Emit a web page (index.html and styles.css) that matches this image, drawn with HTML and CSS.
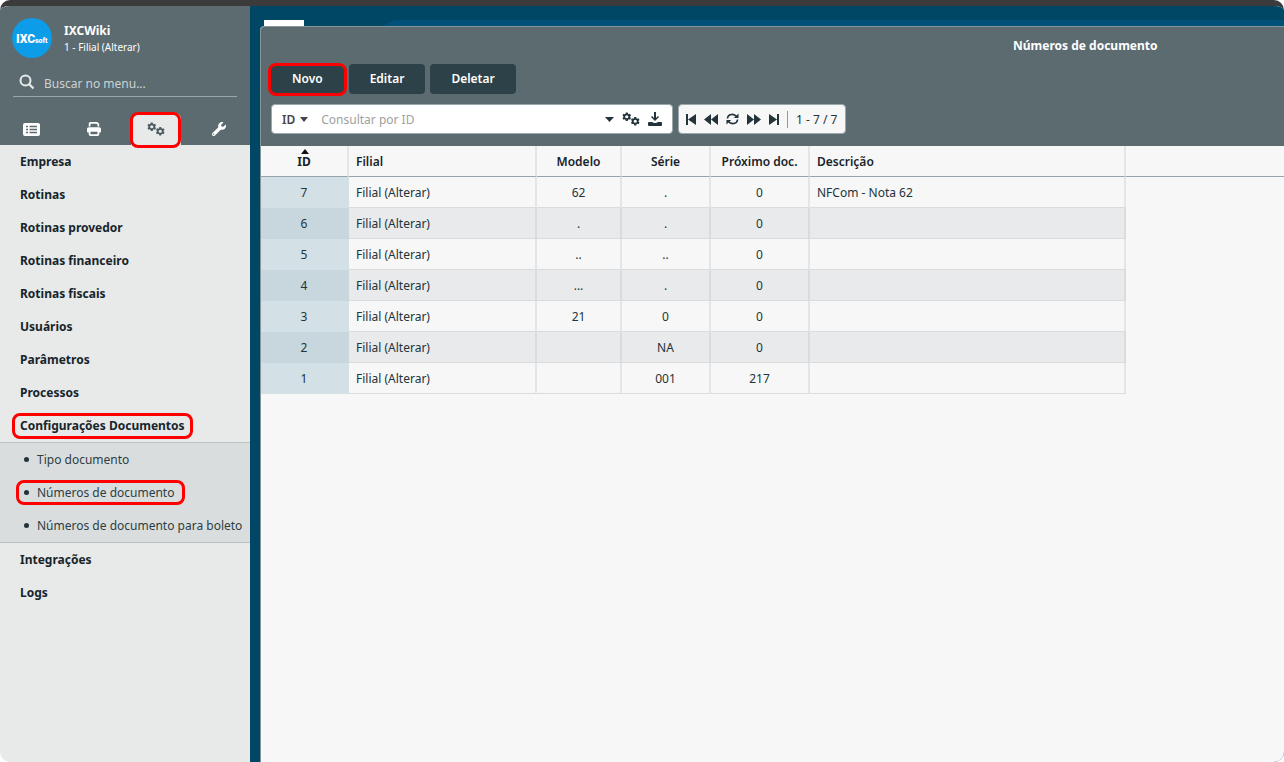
FILE: index.html
```
<!DOCTYPE html>
<html lang="pt-BR">
<head>
<meta charset="utf-8">
<title>Números de documento</title>
<link rel="stylesheet" href="styles.css">
</head>
<body>
<svg class="defs" aria-hidden="true">
  <symbol id="gear" viewBox="0 0 20 20"><path fill-rule="evenodd" d="M8 1h4l.6 2.6 1.9 1.1 2.5-.8 2 3.5-1.9 1.8v1.6l1.9 1.8-2 3.5-2.5-.8-1.9 1.1L12 19H8l-.6-2.6-1.9-1.1-2.5.8-2-3.5 1.9-1.8V9.200L1 7.400l2-3.500 2.500.8 1.900-1.100zM10 6.600a3.400 3.400 0 1 0 0 6.800 3.400 3.400 0 0 0 0-6.800z"/></symbol>
  <symbol id="gears" viewBox="0 0 18 14"><use href="#gear" x="0" y="0" width="9.500" height="9.500"/><use href="#gear" x="8.500" y="4.500" width="9.500" height="9.500"/></symbol>
</svg>
<div class="page">
  <aside class="sidebar">
    <header class="side-head">
      <div class="account">
        <svg class="logo" viewBox="0 0 40 40" role="img" aria-label="IXCsoft"><circle cx="20" cy="20" r="20" fill="#0c9ce8"/><text x="4" y="25" class="logo-big">IXC</text><text x="23" y="25" class="logo-small">soft</text></svg>
        <div><strong class="account-name">IXCWiki</strong><span class="account-branch">1 - Filial (Alterar)</span></div>
      </div>
      <label class="menu-search">
        <svg width="16" height="16" viewBox="0 0 16 16"><circle cx="6.500" cy="6.500" r="5" fill="none" stroke="#e6eaea" stroke-width="2"/><path d="M10 10l4.500 4.500" stroke="#e6eaea" stroke-width="2.200"/></svg>
        <input type="text" placeholder="Buscar no menu..." aria-label="Buscar no menu">
      </label>
      <nav class="tabs">
        <button aria-label="Lista"><svg width="17" height="13" viewBox="0 0 17 13"><rect width="17" height="13" rx="2" fill="#fff"/><path d="M3 3.500h2M3 6.500h2M3 9.500h2M6.500 3.500H14M6.500 6.500H14M6.500 9.500H14" stroke="#5b6b6f" stroke-width="1.300"/></svg></button>
        <button aria-label="Imprimir"><svg width="14" height="14" viewBox="0 0 512 512"><path fill="#fff" fill-rule="evenodd" d="M128 0C92.700 0 64 28.700 64 64v96h64V64h226.700L384 93.300V160h64V93.300c0-17-6.700-33.300-18.700-45.300L400 18.700C388 6.700 371.700 0 354.700 0zM384 352v96H128v-96zm64 32h32c17.700 0 32-14.300 32-32v-96c0-35.300-28.700-64-64-64H64c-35.300 0-64 28.700-64 64v96c0 17.700 14.300 32 32 32h32v64c0 35.300 28.700 64 64 64h256c35.300 0 64-28.700 64-64z"/></svg></button>
        <button class="active" aria-label="Configurações"><svg width="18" height="14" fill="#4b5b60"><use href="#gears"/></svg></button>
        <button aria-label="Ferramentas"><svg width="14" height="14" viewBox="0 0 512 512" fill="#fff"><path fill-rule="evenodd" d="M507.730 109.100c-2.240-9.030-13.540-12.090-20.120-5.510l-74.360 74.360-67.880-11.310-11.310-67.880 74.360-74.360c6.620-6.620 3.430-17.900-5.660-20.160-47.380-11.740-99.550.91-136.580 37.930-39.640 39.640-50.550 97.100-34.050 147.200L18.740 402.760c-24.990 24.990-24.990 65.510 0 90.500 24.990 24.990 65.510 24.990 90.500 0l213.210-213.210c50.120 16.710 107.470 5.680 147.370-34.220 37.070-37.070 49.700-89.320 37.910-136.730zM64 472a24 24 0 1 1 0-48 24 24 0 0 1 0 48z"/></svg></button>
      </nav>
    </header>
    <nav class="menu">
      <a href="#">Empresa</a>
      <a href="#">Rotinas</a>
      <a href="#">Rotinas provedor</a>
      <a href="#">Rotinas financeiro</a>
      <a href="#">Rotinas fiscais</a>
      <a href="#">Usuários</a>
      <a href="#">Parâmetros</a>
      <a href="#">Processos</a>
      <a href="#"><span class="mark">Configurações Documentos</span></a>
      <div class="submenu">
        <a href="#"><span>Tipo documento</span></a>
        <a href="#"><span class="mark">Números de documento</span></a>
        <a href="#"><span>Números de documento para boleto</span></a>
      </div>
      <a href="#">Integrações</a>
      <a href="#">Logs</a>
    </nav>
  </aside>
  <main class="desktop">
    <div class="tile-white"></div>
    <div class="tile-blue"></div>
    <section class="window">
      <header class="win-head">
        <h1>Números de documento</h1>
        <div class="actions">
          <button class="mark">Novo</button><button>Editar</button><button>Deletar</button>
        </div>
        <div class="tools">
          <div class="query">
            <button class="field">ID <svg width="8" height="5" viewBox="0 0 8 5"><path d="M0 0h8L4 5z"/></svg></button>
            <input type="text" placeholder="Consultar por ID" aria-label="Consultar por ID">
            <button aria-label="Opções"><svg width="9" height="5" viewBox="0 0 9 5"><path d="M0 0h9L4.500 5z"/></svg></button>
            <button aria-label="Configurar"><svg width="18" height="14"><use href="#gears"/></svg></button>
            <button aria-label="Baixar"><svg width="14" height="14" viewBox="0 0 14 14"><path d="M6 0h2v6l2-2 1 1-4 4-4-4 1-1 2 2zM1 10h3l2 1h2l2-1h3a1 1 0 0 1 1 1v2a1 1 0 0 1-1 1H1a1 1 0 0 1-1-1v-2a1 1 0 0 1 1-1z"/></svg></button>
          </div>
          <div class="pager">
            <button aria-label="Primeira"><svg width="10" height="11" viewBox="0 0 10 11"><path d="M0 0h2v11H0zM10 0v11L2 5.500z"/></svg></button>
            <button aria-label="Anterior"><svg width="14" height="11" viewBox="0 0 14 11"><path d="M7 0v11L0 5.500zM14 0v11L7 5.500z"/></svg></button>
            <button aria-label="Atualizar"><svg width="13" height="12" viewBox="0 0 14 12"><path d="M1.500 5.500C2 .5 8.500-.5 11.500 3.500M12.500 6.500C12 11.500 5.500 12.500 2.500 8.500" fill="none" stroke="#22343a" stroke-width="1.700"/><path d="M13.500 0v5h-5zM.5 12V7h5z"/></svg></button>
            <button aria-label="Próxima"><svg width="14" height="11" viewBox="0 0 14 11"><path d="M0 0v11l7-5.500zM7 0v11l7-5.500z"/></svg></button>
            <button aria-label="Última"><svg width="10" height="11" viewBox="0 0 10 11"><path d="M8 0h2v11H8zM0 0v11l8-5.500z"/></svg></button>
            <span class="count">1 - 7 / 7</span>
          </div>
        </div>
      </header>
      <div class="grid">
        <table>
          <colgroup><col class="c-id"><col class="c-branch"><col class="c-model"><col class="c-serie"><col class="c-next"><col class="c-desc"><col></colgroup>
          <thead><tr><th class="sorted">ID</th><th class="left">Filial</th><th>Modelo</th><th>Série</th><th>Próximo doc.</th><th class="left">Descrição</th><td class="rest"></td></tr></thead>
          <tbody>
            <tr><td>7</td><td>Filial (Alterar)</td><td>62</td><td>.</td><td>0</td><td>NFCom - Nota 62</td></tr>
            <tr><td>6</td><td>Filial (Alterar)</td><td>.</td><td>.</td><td>0</td><td></td></tr>
            <tr><td>5</td><td>Filial (Alterar)</td><td>..</td><td>..</td><td>0</td><td></td></tr>
            <tr><td>4</td><td>Filial (Alterar)</td><td>...</td><td>.</td><td>0</td><td></td></tr>
            <tr><td>3</td><td>Filial (Alterar)</td><td>21</td><td>0</td><td>0</td><td></td></tr>
            <tr><td>2</td><td>Filial (Alterar)</td><td></td><td>NA</td><td>0</td><td></td></tr>
            <tr><td>1</td><td>Filial (Alterar)</td><td></td><td>001</td><td>217</td><td></td></tr>
          </tbody>
        </table>
      </div>
    </section>
  </main>
</div>
</body>
</html>
```
FILE: styles.css
```
* { box-sizing: border-box; }
body { margin: 0; background: #fff; color: #22343a; font: 12px/16px "Noto Sans", "Open Sans", sans-serif; }
button, input { font: inherit; color: inherit; border: 0; background: none; padding: 0; margin: 0; }
input { outline: 0; min-width: 0; }
svg { display: block; }
.defs { position: absolute; width: 0; height: 0; }

.page { display: flex; min-height: 100vh; border-top: 6px solid #3b3b3b; border-radius: 10px; overflow: hidden; }

/* highlight frame drawn over an item */
.mark { position: relative; }
.mark::after { content: ""; position: absolute; border: 3px solid #ff0000; border-radius: 8px; inset: -5px -8px -5px -8px; }

.sidebar { flex: none; width: 250px; background: #e7eae9; }
.side-head { display: flex; flex-direction: column; height: 139px; background: #5b6b6f; color: #fff; }
.account { display: flex; align-items: center; gap: 12px; padding: 12px 12px 0; }
.logo { width: 40px; height: 40px; }
.logo text { fill: #fff; font-family: Roboto, sans-serif; font-weight: 900; }
.logo-big { font-size: 12px; }
.logo-small { font-size: 7px; }
.account-name, .account-branch { display: block; }
.account-name { padding-top: 2px; }
.account-branch { font-size: 10px; }
.menu-search { display: flex; align-items: center; gap: 9px; margin: 10px 13px 0; padding: 0 6px; height: 29px; border-bottom: 1px solid #9ba5a8; }
.menu-search input { flex: 1; padding-top: 3px; }
.menu-search input::placeholder { color: #ccd2d4; opacity: 1; }
.tabs { display: flex; margin-top: auto; }
.tabs button { flex: 1; display: flex; align-items: center; justify-content: center; height: 32px; }
.tabs .active { position: relative; flex: none; width: 50px; margin: 0 6px; background: #e7eae9; border-radius: 6px 6px 0 0; }
.tabs .active::after { content: ""; position: absolute; inset: -1px 0 -3px -1px; border: 3px solid #ff0000; border-radius: 8px; }

.menu a { display: flex; align-items: center; height: 33px; padding-left: 20px; color: #17242b; font-weight: 700; text-decoration: none; }
.submenu { background: #dadddd; border: solid #b9c2c3; border-width: 1px 0; }
.submenu a { padding-left: 24px; font-weight: 400; color: #2d3d43; white-space: nowrap; }
.submenu span { display: flex; align-items: center; gap: 8px; }
.submenu span::before { content: ""; width: 5px; height: 5px; border-radius: 50%; background: #22343a; }
.submenu .mark::after { inset: -5px -11px -4px -8px; }

.desktop { flex: 1; min-width: 0; position: relative; display: flex; padding: 20px 0 0 10px; background: #004766; }
.tile-white { position: absolute; left: 14px; top: 14px; width: 40px; height: 12px; background: #fff; }
.tile-blue { position: absolute; left: 128px; right: 0; top: 14px; height: 40px; border-radius: 20px 0 0 0; background: #005079; }
.window { flex: 1; min-width: 0; position: relative; display: flex; flex-direction: column; border: solid #85969b; border-width: 1px 0 0 1px; border-radius: 4px 0 0 0; background: #f7f7f7; overflow: hidden; }
.win-head { height: 119px; padding: 11px 10px 0; background: #5b6b6f; }
h1 { margin: 0 0 10px 742px; font-size: 12px; line-height: 16px; font-weight: 700; color: #fff; white-space: nowrap; }
.actions { display: flex; gap: 5px; }
.actions button { height: 30px; padding: 0 21px; border-radius: 4px; background: #2d4148; color: #fff; font-weight: 600; }
.actions .mark::after { inset: -1px -3px -2px -3px; }
.tools { display: flex; gap: 5px; margin-top: 10px; }
.query, .pager { display: flex; align-items: center; height: 30px; border: 1px solid #9aa7ab; border-radius: 4px; background: #fff; fill: #22343a; }
.query { width: 402px; padding: 0 10px; gap: 8px; }
.query input { flex: 1; padding-top: 2px; }
.query input::placeholder { color: #a0a0a0; opacity: 1; }
.field { display: flex; align-items: center; gap: 5px; margin-right: 5px; padding-top: 1px; font-weight: 600; color: #444; fill: #444; }
.pager { width: 168px; padding: 0 7px; gap: 8px; background: #f7f7f7; }
.count { padding: 1px 0 0 8px; border-left: 1px solid #8d9a9e; white-space: nowrap; }

table { width: 100%; table-layout: fixed; border-collapse: separate; border-spacing: 0; }
.c-id { width: 88px; } .c-branch { width: 188px; } .c-model { width: 85px; } .c-serie { width: 89px; } .c-next { width: 99px; } .c-desc { width: 316px; }
th, td { height: 31px; padding: 1px 7px 0; text-align: center; border-right: 2px solid #e3e5e6; border-bottom: 1px solid #d9dcde; white-space: nowrap; }
th { font-weight: 600; color: #17242b; }
thead th, thead td { border-bottom-color: #93a5aa; }
thead .rest { border-right: 0; }
.left, tbody td:nth-child(2), tbody td:nth-child(6) { text-align: left; }
tbody tr:nth-child(even) td { background: #e9eaec; border-right-color: #d9dbdd; }
tbody tr td:first-child { background: #d3e1e6; border-color: #d3e1e6; }
tbody tr:nth-child(even) td:first-child { background: #c8d7de; border-color: #c8d7de; }
.sorted { position: relative; }
thead .sorted { font-weight: 700; }
.sorted::before { content: ""; position: absolute; top: 3px; left: 50%; margin-left: -3px; border: solid transparent; border-width: 0 4px 5px; border-bottom-color: #111; }
```
